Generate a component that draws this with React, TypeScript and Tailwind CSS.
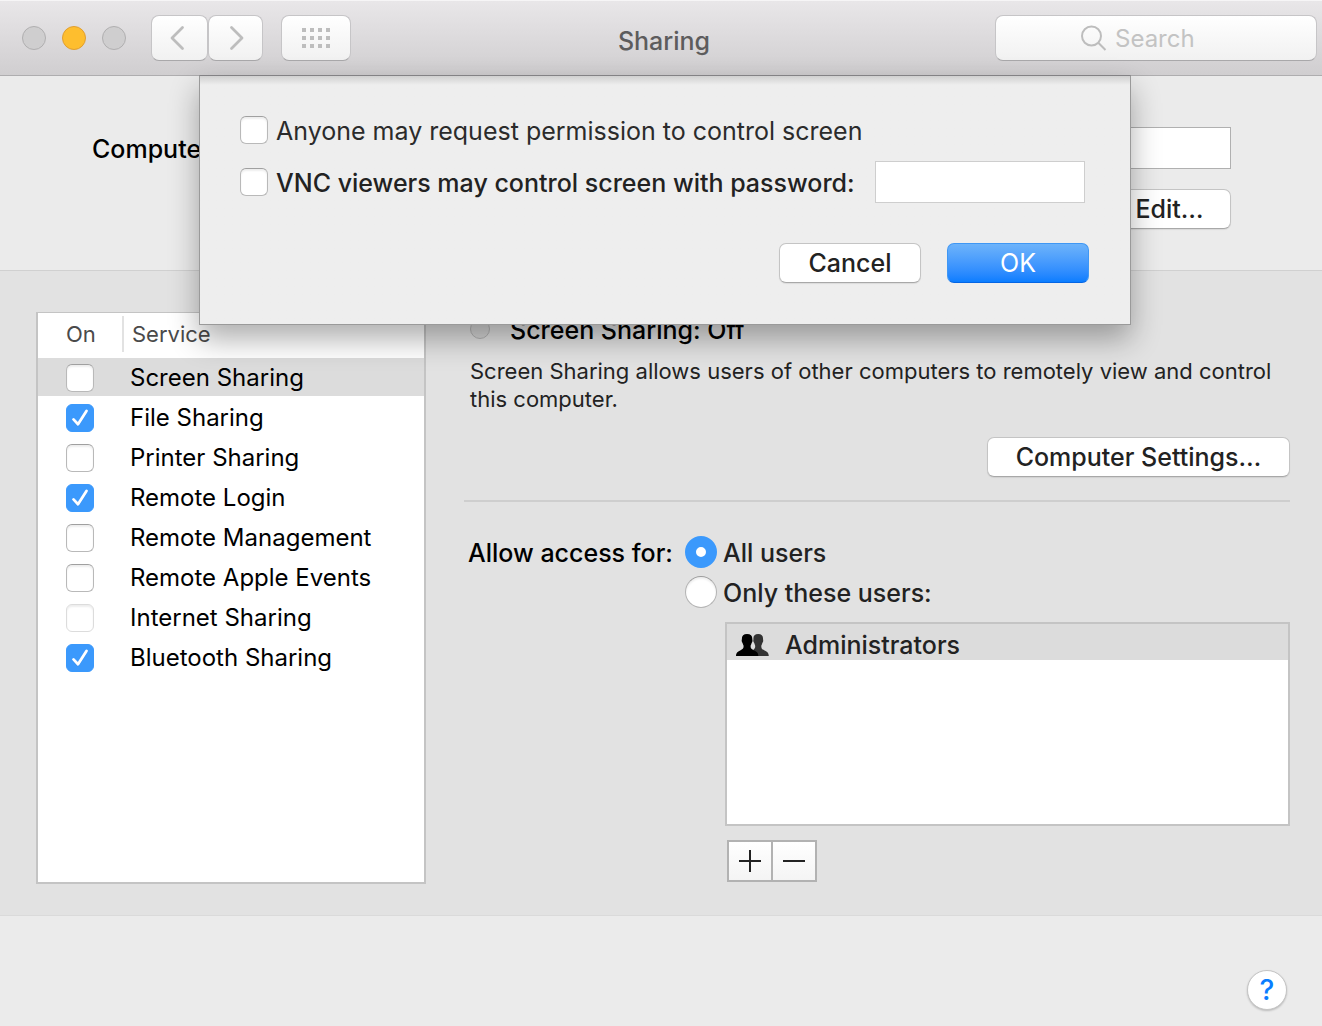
import React, { useState } from 'react';

interface Service {
  id: string;
  name: string;
  on: boolean;
  disabled?: boolean;
}

const INITIAL_SERVICES: Service[] = [
  { id: 'screen', name: 'Screen Sharing', on: false },
  { id: 'file', name: 'File Sharing', on: true },
  { id: 'printer', name: 'Printer Sharing', on: false },
  { id: 'login', name: 'Remote Login', on: true },
  { id: 'management', name: 'Remote Management', on: false },
  { id: 'events', name: 'Remote Apple Events', on: false },
  { id: 'internet', name: 'Internet Sharing', on: false, disabled: true },
  { id: 'bluetooth', name: 'Bluetooth Sharing', on: true },
];

const TOOL_BUTTON =
  'flex h-[46px] items-center justify-center rounded-lg border border-[#c6c5c7] border-b-[#a9a8aa] bg-linear-to-b from-white to-[#f1f1f1] text-[#bdbdbd]';

const PUSH_BUTTON =
  'h-10 rounded-[7px] border border-[#c4c4c4] border-b-[#a8a8a8] bg-white text-[25px] leading-[30px] font-[450] text-[#222] shadow-[0_1px_1px_rgba(0,0,0,0.08)]';

interface CheckboxProps {
  id: string;
  checked: boolean;
  disabled?: boolean;
  onChange: (checked: boolean) => void;
}

const Checkbox: React.FC<CheckboxProps> = ({ id, checked, disabled, onChange }) => (
  <span className="relative block h-7 w-7 shrink-0">
    <input
      id={id}
      type="checkbox"
      checked={checked}
      disabled={disabled}
      onChange={(e) => onChange(e.target.checked)}
      className="block h-7 w-7 appearance-none rounded-md border border-[#b9b9b9] border-t-[#a0a0a0] bg-white shadow-[inset_0_2px_2px_rgba(0,0,0,0.07)] checked:border-[#3b99fc] checked:bg-[#3b99fc] checked:shadow-none disabled:border-[#dcdcdc]"
    />
    {checked && (
      <svg viewBox="0 0 28 28" className="pointer-events-none absolute inset-0 h-7 w-7" fill="none">
        <path d="M7.5 16.2 L12 21 L20.5 7.5" stroke="#1f7fe6" strokeOpacity="0.5" strokeWidth="2.6" strokeLinecap="round" strokeLinejoin="round" />
        <path d="M7.5 15.4 L12 20.2 L20.5 7" stroke="#fff" strokeWidth="2.8" strokeLinecap="round" strokeLinejoin="round" />
      </svg>
    )}
  </span>
);

const RADIO =
  'h-8 w-8 shrink-0 appearance-none rounded-full border border-[#b4b4b4] border-t-[#9c9c9c] bg-white shadow-[inset_0_2px_2px_rgba(0,0,0,0.07)] checked:border-[11px] checked:border-[#3b99fc] checked:shadow-none';

const Toolbar: React.FC = () => (
  <header className="grid h-[76px] grid-cols-[1fr_auto_1fr] items-center border-b border-[#aeadaf] bg-linear-to-b from-[#e9e7e9] to-[#d0ced0] pr-[5px] pl-[11px] shadow-[inset_0_1px_0_#f6f5f6]">
    <div className="flex items-center pl-[11px]">
      <div className="flex gap-4">
        <button aria-label="Close" className="h-6 w-6 rounded-full border border-[#b0afb0] bg-[#cfcecf]" />
        <button aria-label="Minimize" className="h-6 w-6 rounded-full border border-[#e09e31] bg-[#febe2e]" />
        <button aria-label="Zoom" className="h-6 w-6 rounded-full border border-[#b0afb0] bg-[#cfcecf]" />
      </div>
      <div className="ml-[25px] flex">
        <button aria-label="Back" className={`${TOOL_BUTTON} w-[57px]`}>
          <svg width="16" height="26" viewBox="0 0 16 26" fill="none" stroke="currentColor" strokeWidth="2.8" strokeLinecap="round" strokeLinejoin="round" className="mr-1.5">
            <path d="M13.5 2.5 L3 13 L13.5 23.5" />
          </svg>
        </button>
        <button aria-label="Forward" className={`${TOOL_BUTTON} w-[55px]`}>
          <svg width="16" height="26" viewBox="0 0 16 26" fill="none" stroke="currentColor" strokeWidth="2.8" strokeLinecap="round" strokeLinejoin="round" className="ml-0.5">
            <path d="M2.5 2.5 L13 13 L2.5 23.5" />
          </svg>
        </button>
      </div>
      <button aria-label="Show All" className={`${TOOL_BUTTON} ml-[18px] w-[70px]`}>
        <svg width="28" height="20" viewBox="0 0 28 20" fill="currentColor">
          {[0, 8, 16].map((y) =>
            [0, 8, 16, 24].map((x) => <rect key={`${x}-${y}`} x={x} y={y} width="4" height="4" />),
          )}
        </svg>
      </button>
    </div>
    <h1 className="pt-1.5 text-[25px] leading-[30px] font-[450] text-[#5d5c5d]">Sharing</h1>
    <div className="flex justify-end">
      <label className={`${TOOL_BUTTON} w-[322px] pl-[85px]`}>
        <svg width="26" height="26" viewBox="0 0 26 26" fill="none" stroke="currentColor" strokeWidth="2" className="shrink-0">
          <circle cx="10.5" cy="11" r="9.5" />
          <path d="M17.3 17.8 L24.5 25" />
        </svg>
        <input
          type="search"
          aria-label="Search"
          placeholder="Search"
          className="ml-2 min-w-0 flex-1 bg-transparent pt-0.5 text-2xl leading-7 text-[#333] outline-none placeholder:text-[#c3c3c3]"
        />
      </label>
    </div>
  </header>
);

const VncSheet: React.FC = () => {
  const [anyone, setAnyone] = useState(false);
  const [vnc, setVnc] = useState(false);

  return (
    <form
      role="dialog"
      aria-label="Computer Settings"
      onSubmit={(e) => e.preventDefault()}
      className="absolute -top-px right-[191px] left-[199px] z-10 border border-[#9a9a9a] border-t-[#838285] bg-[#eee] bg-linear-to-b from-[#d0d0d0] to-[#eee] to-[9px] pt-[38px] pr-[41px] pb-[41px] pl-10 shadow-[0_14px_28px_rgba(0,0,0,0.32)]"
    >
      <div className="flex h-8 items-center">
        <Checkbox id="anyone" checked={anyone} onChange={setAnyone} />
        <label htmlFor="anyone" className="pt-0.5 pl-2 text-[25px] leading-[30px] text-[#2b2b2b]">
          Anyone may request permission to control screen
        </label>
      </div>
      <div className="mt-[15px] flex h-[42px] items-center">
        <Checkbox id="vnc" checked={vnc} onChange={setVnc} />
        <label htmlFor="vnc" className="pt-0.5 pl-2 text-[25px] leading-[30px] font-[450] text-[#222]">
          VNC viewers may control screen with password:
        </label>
        <input
          type="password"
          aria-label="VNC password"
          className="mr-1 ml-auto h-[42px] w-[210px] border border-[#cecece] bg-white px-2"
        />
      </div>
      <div className="mt-10 flex justify-end gap-[26px]">
        <button type="button" className={`${PUSH_BUTTON} w-[142px]`}>Cancel</button>
        <button
          type="submit"
          className="h-10 w-[142px] rounded-[7px] border border-[#3f97f4] border-b-[#0465e4] bg-linear-to-b from-[#6db3fa] to-[#087dff] text-[25px] leading-[30px] text-white"
        >
          OK
        </button>
      </div>
    </form>
  );
};

const ServiceTable: React.FC = () => {
  const [services, setServices] = useState(INITIAL_SERVICES);

  const toggle = (id: string, on: boolean) =>
    setServices((prev) => prev.map((s) => (s.id === id ? { ...s, on } : s)));

  return (
    <div className="h-[572px] w-[390px] shrink-0 border-2 border-t border-[#c4c4c4] bg-white">
      <table className="w-full table-fixed border-separate border-spacing-0 text-left">
        <thead>
          <tr className="h-[45px] text-[22px] leading-[26px] text-[#4a4a4a]">
            <th scope="col" className="w-[84px] p-0 pb-1 pl-7 font-normal">On</th>
            <th scope="col" className="p-0 pb-1 font-normal">
              <div className="flex h-9 items-center border-l-2 border-[#e2e2e2] pl-2">Service</div>
            </th>
          </tr>
        </thead>
        <tbody>
          {services.map((s, idx) => (
            <tr key={s.id} className={`h-10 text-2xl leading-7 text-black ${idx === 0 ? 'bg-[#dcdcdc]' : ''}`}>
              <td className="border-b-2 border-white p-0 pt-0.5 pl-7">
                <Checkbox id={s.id} checked={s.on} disabled={s.disabled} onChange={(on) => toggle(s.id, on)} />
              </td>
              <td className="border-b-2 border-white p-0 pt-0.5 pl-2">
                <label htmlFor={s.id}>{s.name}</label>
              </td>
            </tr>
          ))}
        </tbody>
      </table>
    </div>
  );
};

const UsersIcon: React.FC = () => (
  <svg width="33" height="22" viewBox="0 0 33 22">
    <path
      fill="#333"
      d="M22.2 0 C25.6 0 27.2 1.8 27 4.8 C27 5.8 27.4 6.2 27.1 7.4 C26.9 8.2 26.4 8.4 26.1 9.8 C25.8 10.8 25.3 11.3 25.3 12.3 C25.3 14.6 26 15.4 28.6 16.4 C31.4 17.6 32.6 18.6 32.8 22 H16 L17.6 15.4 C18.9 14.6 19.2 13.6 19.2 12.3 C19.2 11.3 18.8 10.8 18.5 9.8 C18.2 8.4 17.6 8.2 17.4 7.4 C17.1 6.2 17.5 5.8 17.4 4.8 C17.3 1.8 18.8 0 22.2 0 Z"
    />
    <path
      fill="#000"
      d="M11 0 C14.6 0 16.4 1.8 16.3 4.8 C16.3 5.8 16.7 6.2 16.4 7.4 C16.2 8.2 15.7 8.4 15.4 9.8 C15.1 10.8 14.6 11.3 14.6 12.3 C14.6 14.6 15.6 15.4 18.2 16.4 C21 17.6 22.2 18.6 22.4 22 H0 C0.2 18.6 1.4 17.6 4.2 16.4 C6.6 15.4 7.6 14.6 7.6 12.3 C7.6 11.3 7.1 10.8 6.8 9.8 C6.5 8.4 6 8.2 5.8 7.4 C5.5 6.2 5.9 5.8 5.9 4.8 C5.8 1.8 7.6 0 11 0 Z"
    />
  </svg>
);

const ServiceDetail: React.FC = () => {
  const [access, setAccess] = useState<'all' | 'only'>('all');

  return (
    <section className="min-w-0 flex-1">
      <div className="mb-[11px] flex h-[34px] items-center pl-1.5">
        <span className="h-5 w-5 rounded-full border border-[#b5b5b5] bg-[#d6d6d6]" />
        <h2 className="pt-0.5 pl-5 text-[25px] leading-[30px] font-[450] text-black">Screen Sharing: Off</h2>
      </div>
      <p className="pl-1.5 text-[22px] leading-7 text-[#222]">
        Screen Sharing allows users of other computers to remotely view and control this computer.
      </p>
      <div className="mt-6 flex justify-end">
        <button className={`${PUSH_BUTTON} w-[303px]`}>Computer Settings…</button>
      </div>
      <hr className="mt-[23px] border-t-2 border-[#cecece]" />

      <div role="radiogroup" aria-labelledby="access-label" className="mt-[30px] flex text-[25px] leading-[30px]">
        <span id="access-label" className="flex h-10 w-[221px] items-center pt-0.5 pl-1 font-[450] text-black">Allow access for:</span>
        <div className="min-w-0 flex-1 text-[#222]">
          <label className="flex h-10 items-center gap-1.5">
            <input type="radio" name="access" checked={access === 'all'} onChange={() => setAccess('all')} className={RADIO} />
            <span className="pt-0.5 font-[450]">All users</span>
          </label>
          <label className="flex h-10 items-center gap-1.5">
            <input type="radio" name="access" checked={access === 'only'} onChange={() => setAccess('only')} className={RADIO} />
            <span className="pt-0.5 font-[450]">Only these users:</span>
          </label>
          <ul className="mt-2.5 ml-10 h-[204px] border-2 border-[#c4c4c4] bg-white">
            <li className="flex h-9 items-center gap-4 bg-[#dcdcdc] pt-1.5 pl-[9px] font-[450]">
              <UsersIcon />
              Administrators
            </li>
          </ul>
          <div className="mt-3.5 ml-[42px] flex w-[90px] border-2 border-[#b2b2b2]">
            <button aria-label="Add" className="flex h-[38px] w-[44px] items-center justify-center border-r-2 border-[#b2b2b2] bg-linear-to-b from-white to-[#f4f4f4]">
              <svg width="22" height="22" viewBox="0 0 22 22" fill="#222">
                <path d="M10 0 H12 V10 H22 V12 H12 V22 H10 V12 H0 V10 H10 Z" />
              </svg>
            </button>
            <button aria-label="Remove" className="flex h-[38px] w-[42px] items-center justify-center bg-linear-to-b from-white to-[#f4f4f4]">
              <svg width="22" height="22" viewBox="0 0 22 22" fill="#222">
                <path d="M0 10 H22 V12 H0 Z" />
              </svg>
            </button>
          </div>
        </div>
      </div>
    </section>
  );
};

const App: React.FC = () => (
  <div className="flex min-h-screen flex-col bg-[#ebebeb] font-['Inter','Liberation_Sans',sans-serif]">
    <Toolbar />
    <main className="relative">
      <div className="flex h-[195px] items-start justify-between border-b border-[#d0d0d0] pt-[51px] pr-[91px] pl-[92px]">
        <label htmlFor="computer-name" className="flex h-[42px] items-center pt-0.5 text-[25px] leading-[30px] font-[450] text-black">
          Computer Name:
        </label>
        <div className="ml-4 flex flex-1 flex-col items-end gap-5">
          <input id="computer-name" type="text" className="h-[42px] w-full border border-[#b0b0b0] bg-white px-2" />
          <button className={`${PUSH_BUTTON} w-[123px]`}>Edit…</button>
        </div>
      </div>
      <div className="flex gap-[38px] border-b border-[#dadada] bg-[#e2e2e2] pt-[41px] pr-8 pb-[31px] pl-9">
        <ServiceTable />
        <ServiceDetail />
      </div>
      <VncSheet />
    </main>
    <footer className="flex flex-1 items-end justify-end pt-[54px] pr-[35px] pb-4">
      <button
        aria-label="Help"
        className="h-10 w-10 rounded-full border border-[#c4c4c4] bg-white text-[28px] leading-[36px] font-[450] text-[#0a7dff] shadow-[0_1px_2px_rgba(0,0,0,0.2)]"
      >
        ?
      </button>
    </footer>
  </div>
);

export default App;
